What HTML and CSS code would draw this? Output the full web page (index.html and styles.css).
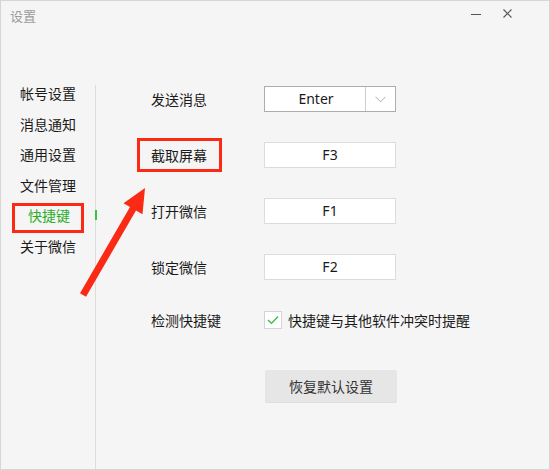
FILE: index.html
```html
<!DOCTYPE html>
<html lang="zh-CN">
<head>
  <meta charset="UTF-8">
  <title>设置</title>
  <link rel="stylesheet" href="styles.css">
</head>
<body>

  <div class="window">
    <div class="titlebar">
      <span class="title">设置</span>
      <div class="controls">
        <span class="min"></span>
        <svg class="close" width="9" height="9" viewBox="0 0 9 9">
          <path d="M0.5 0.5 L8.5 8.5 M8.5 0.5 L0.5 8.5" stroke="#555" stroke-width="1.1" fill="none"/>
        </svg>
      </div>
    </div>

    <div class="main">
      <ul class="nav">
        <li>帐号设置</li>
        <li>消息通知</li>
        <li>通用设置</li>
        <li>文件管理</li>
        <li class="active">快捷键</li>
        <li>关于微信</li>
      </ul>
      <div class="divider"></div>

      <div class="content">
        <div class="row">
          <span class="label">发送消息</span>
          <div class="select">
            <span class="select-value">Enter</span>
            <span class="select-arrow">
              <svg width="11" height="7" viewBox="0 0 11 7">
                <path d="M0.5 0.8 L5.5 5.8 L10.5 0.8" stroke="#aaa" stroke-width="1" fill="none"/>
              </svg>
            </span>
          </div>
        </div>
        <div class="row">
          <span class="label">截取屏幕</span>
          <div class="key">F3</div>
        </div>
        <div class="row">
          <span class="label">打开微信</span>
          <div class="key">F1</div>
        </div>
        <div class="row">
          <span class="label">锁定微信</span>
          <div class="key">F2</div>
        </div>
        <div class="row check-row">
          <span class="label">检测快捷键</span>
          <span class="checkbox">
            <svg width="12" height="10" viewBox="0 0 12 10">
              <path d="M1 5 L4.5 8.5 L11 1.5" stroke="#2dbb3d" stroke-width="1.2" fill="none"/>
            </svg>
          </span>
          <span class="check-text">快捷键与其他软件冲突时提醒</span>
        </div>
        <button class="reset">恢复默认设置</button>
      </div>
    </div>

    <!-- 标注 -->
    <div class="mark mark-nav"></div>
    <div class="mark mark-label"></div>
    <svg class="arrow" width="550" height="470" viewBox="0 0 550 470">
      <polygon fill="#fb2a14" points="145,188 142.5,214.3 136,210.6 86,296.8 80,293.2 130,207 123.5,203.3"/>
    </svg>
  </div>

</body>
</html>
```

FILE: styles.css
```css
body {
  margin: 0;
  font-family: "Noto Sans CJK SC", "Noto Sans", sans-serif;
  font-size: 14px;
  color: #1a1a1a;
}

.window {
  position: relative;
  width: 550px;
  height: 470px;
  box-sizing: border-box;
  background: #f5f5f5;
  border: 1px solid #d6d6d6;
  overflow: hidden;
}

.titlebar {
  height: 77px;
  display: flex;
  justify-content: space-between;
  align-items: flex-start;
}

.title {
  margin: 6px 0 0 9px;
  font-size: 13px;
  line-height: 18px;
  color: #9a9a9a;
}

.controls {
  display: flex;
  align-items: center;
  gap: 22px;
  margin: 7px 37px 0 0;
  height: 10px;
}

.min {
  display: block;
  width: 10px;
  height: 1px;
  background: #555;
  margin-top: 2px;
}

.close {
  display: block;
}

.main {
  display: flex;
  height: 391px;
}

/* 左侧菜单 */
.nav {
  list-style: none;
  margin: 0;
  padding: 0;
  width: 94px;
}

.nav li {
  position: relative;
  padding-left: 19px;
  height: 30.6px;
  line-height: 30.6px;
}

.nav li.active {
  color: #2aae2a;
  padding-left: 27px;
}

.nav li.active::after {
  content: "";
  position: absolute;
  right: -2px;
  top: 10px;
  width: 2px;
  height: 10px;
  background: #3cc23c;
}

.divider {
  width: 1px;
  margin-top: 7px;
  background: #dcdcdc;
}

/* 右侧内容 */
.content {
  padding: 8px 0 0 55px;
  display: flex;
  flex-direction: column;
  gap: 30px;
}

.row {
  display: flex;
  align-items: center;
  height: 26px;
}

.label {
  width: 113px;
}

.select {
  display: flex;
  width: 132px;
  height: 26px;
  box-sizing: border-box;
  background: #fff;
  border: 1px solid #adadad;
}

.select-value {
  flex: 1;
  text-align: center;
  line-height: 24px;
  font-family: "Noto Sans", sans-serif;
  font-size: 14px;
  padding-left: 2px;
}

.select-arrow {
  width: 29px;
  border-left: 1px solid #cfcfcf;
  display: flex;
  align-items: center;
  justify-content: center;
}

.key {
  width: 132px;
  height: 26px;
  box-sizing: border-box;
  background: #fff;
  border: 1px solid #dcdcdc;
  text-align: center;
  line-height: 24px;
  font-family: "Noto Sans", sans-serif;
}

.check-row {
  margin-top: -3px;
}

.checkbox {
  width: 18px;
  height: 18px;
  box-sizing: border-box;
  background: #fff;
  border: 1px solid #d4d4d4;
  display: flex;
  align-items: center;
  justify-content: center;
}

.check-text {
  margin-left: 6px;
}

.reset {
  margin: 7px 0 0 114px;
  width: 132px;
  height: 32px;
  border: none;
  border-radius: 2px;
  background: #e6e6e6;
  color: #333;
  font-family: inherit;
  font-size: 14px;
  box-shadow: 0 1px 0 #dedede;
}

/* 红色标注 */
.mark {
  position: absolute;
  border: 3px solid #fb2a14;
  box-sizing: border-box;
}

.mark-nav {
  left: 11px;
  top: 202px;
  width: 72px;
  height: 30px;
}

.mark-label {
  left: 136px;
  top: 137px;
  width: 85px;
  height: 34px;
}

.arrow {
  position: absolute;
  left: -1px;
  top: -1px;
  pointer-events: none;
}
```
